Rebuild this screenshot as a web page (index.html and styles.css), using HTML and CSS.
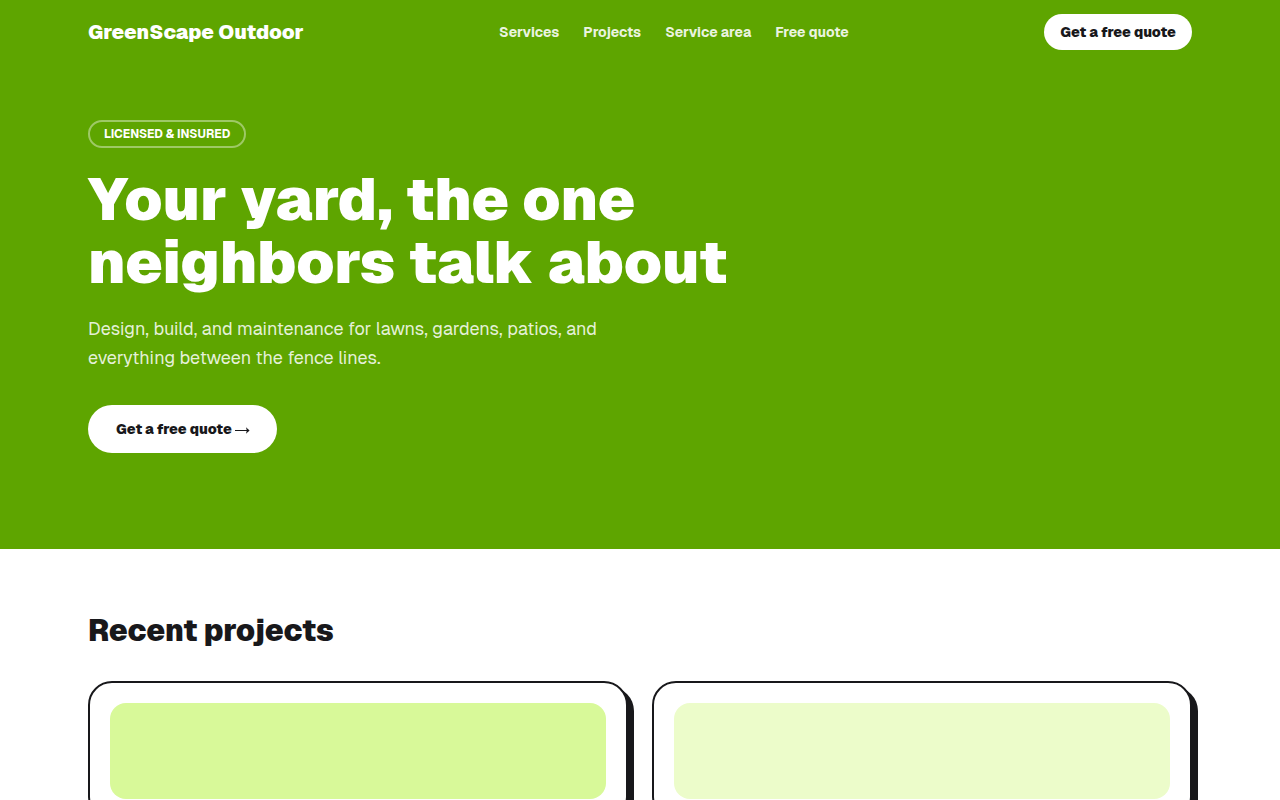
FILE: index.html
```html
<!DOCTYPE html>
<html lang="en">
<head>
<meta charset="utf-8">
<meta name="viewport" content="width=device-width, initial-scale=1">
<title>GreenScape Outdoor</title>
<link rel="stylesheet" href="styles.css">
</head>
<body>
<div class="banner">
  <header class="container topbar">
    <a class="brand" href="#">GreenScape Outdoor</a>
    <nav class="nav">
      <a href="#services">Services</a>
      <a href="#projects">Projects</a>
      <a href="#area">Service area</a>
      <a href="#quote">Free quote</a>
    </nav>
    <a class="button button-small" href="#quote">Get a free quote</a>
  </header>
  <section class="container hero">
    <p class="badge">LICENSED &amp; INSURED</p>
    <h1>Your yard, the one neighbors talk about</h1>
    <p class="lead">Design, build, and maintenance for lawns, gardens, patios, and everything between the fence lines.</p>
    <a class="button button-large" href="#quote">Get a free quote <svg class="arrow" viewBox="0 0 14 9" aria-hidden="true"><path class="shaft" d="M0 5.500h14"/><path d="M11 2.200 14.600 5.500 11 8.800 11.800 5.500z"/></svg></a>
  </section>
</div>
<main class="container projects" id="projects">
  <h2>Recent projects</h2>
  <div class="grid">
    <article class="card"><div class="swatch swatch-lime"></div></article>
    <article class="card"><div class="swatch swatch-pale"></div></article>
  </div>
</main>
</body>
</html>
```
FILE: styles.css
```css
* { box-sizing: border-box; }
body {
  margin: 0;
  background: #fff;
  color: #18181b;
  font-family: Geist, Inter, "Liberation Sans", sans-serif;
  font-size: 16px;
  line-height: 24px;
}
h1, h2, p { margin: 0; }
a { color: inherit; text-decoration: none; }
.container { width: 100%; max-width: 1152px; margin: 0 auto; padding: 0 24px; }
.banner { background: #5ea500; color: #fff; }
.topbar { display: flex; align-items: center; justify-content: space-between; height: 64px; }
.brand { font-size: 20px; line-height: 28px; font-weight: 900; }
.nav { display: flex; gap: 24px; font-size: 14px; line-height: 20px; font-weight: 700; color: rgba(255,255,255,.9); }
.button { display: inline-block; border-radius: 999px; background: #fff; color: #18181b; font-weight: 900; font-size: 14px; line-height: 20px; white-space: nowrap; }
.button-small { padding: 8px 16px; }
.button-large { padding: 14px 28px; margin-top: 32px; }
.arrow { width: 14px; height: 9px; overflow: visible; fill: currentColor; }
.shaft { stroke: currentColor; stroke-width: 1px; }
.hero { display: flex; flex-direction: column; align-items: flex-start; padding-top: 56px; padding-bottom: 96px; }
.badge { border: 2px solid rgba(255,255,255,.4); border-radius: 999px; padding: 4px 14px; font-size: 12px; line-height: 16px; font-weight: 700; margin-bottom: 20px; }
h1 { max-width: 672px; font-size: 60px; line-height: 63px; font-weight: 900; }
.lead { max-width: 576px; margin-top: 20px; font-size: 18px; line-height: 1.625; color: rgba(255,255,255,.85); }
.projects { padding-top: 64px; padding-bottom: 64px; }
h2 { font-size: 30px; line-height: 36px; font-weight: 900; }
.grid { display: grid; grid-template-columns: 1fr 1fr; gap: 24px; margin-top: 32px; }
.card { border: 2px solid #18181b; border-radius: 24px; padding: 20px; background: #fff; box-shadow: 6px 6px 0 #18181b; }
.swatch { height: 96px; border-radius: 16px; }
.swatch-lime { background: #d8f999; }
.swatch-pale { background: #ecfcca; }
```
